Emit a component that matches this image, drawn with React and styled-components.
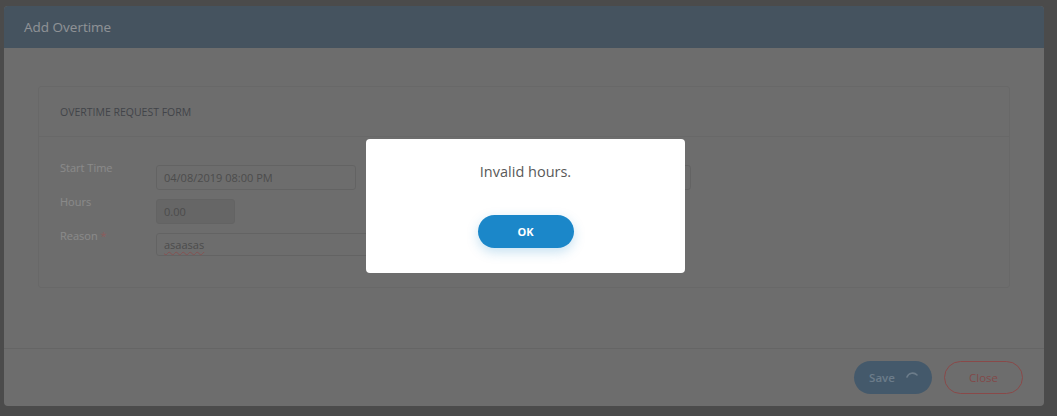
import React from "react";
import styled, { createGlobalStyle } from "styled-components";

const Global = createGlobalStyle`
  html, body { margin: 0; padding: 0; }
  body {
    background: #7d7d7d;
    font-family: "Open Sans", "Noto Sans", sans-serif;
    width: 1057px;
    height: 416px;
    overflow: hidden;
  }
`;

const Page = styled.div`
  position: relative;
  width: 1057px;
  height: 416px;
  padding: 6px 0 0 4px;
  box-sizing: border-box;
`;

const Modal = styled.div`
  width: 1040px;
  height: 400px;
  background: #b6b6b6;
  border-radius: 4px;
  display: flex;
  flex-direction: column;
  overflow: hidden;
`;

const Header = styled.div`
  height: 42px;
  background: #738a9e;
  display: flex;
  align-items: center;
  padding: 0 20px;
  color: #eef4fa;
  font-size: 13.5px;
  font-weight: 500;
`;

const Body = styled.div`
  flex: 1;
  padding: 38px 34px 0;
`;

const Card = styled.div`
  border: 1px solid #adadad;
  border-radius: 3px;
`;

const CardHead = styled.div`
  height: 49px;
  border-bottom: 1px solid #adadad;
  display: flex;
  align-items: center;
  padding: 0 21px;
  color: #6e727a;
  font-size: 10.5px;
  text-transform: uppercase;
`;

const CardBody = styled.div`
  padding: 28px 21px 31px;
  display: flex;
  flex-direction: column;
  gap: 9px;
`;

const Row = styled.div`
  display: flex;
  align-items: flex-start;
`;

const Label = styled.div`
  width: 96px;
  flex: none;
  color: #e6e6e6;
  font-size: 11px;
  line-height: 14px;
  margin-top: -4px;
`;

const Req = styled.span`
  color: #e89a9a;
`;

const Input = styled.div`
  box-sizing: border-box;
  width: ${(p) => p.$w}px;
  height: ${(p) => p.$h || 25}px;
  border: 1px solid #a6a6a6;
  border-radius: 3px;
  background: ${(p) => (p.$disabled ? "#aaaaaa" : "#b6b6b6")};
  color: #7f7f7f;
  font-size: 11px;
  display: flex;
  align-items: center;
  padding: 0 7px;
  margin-left: ${(p) => p.$ml || 0}px;
`;

const Spell = styled.span`
  text-decoration: underline wavy #d88;
  text-decoration-thickness: 1px;
  text-underline-offset: 2px;
`;

const Footer = styled.div`
  height: 57px;
  border-top: 1px solid #a8a8a8;
  display: flex;
  justify-content: flex-end;
  align-items: center;
  gap: 12px;
  padding: 0 21px 0 0;
`;

const SaveBtn = styled.div`
  box-sizing: border-box;
  width: 78px;
  height: 33px;
  border-radius: 17px;
  background: #7295b2;
  color: #b4cfe6;
  font-size: 11.5px;
  font-weight: 600;
  display: flex;
  align-items: center;
  justify-content: center;
  gap: 10px;
  padding-left: 2px;
`;

const CloseBtn = styled.div`
  box-sizing: border-box;
  width: 79px;
  height: 33px;
  border-radius: 17px;
  border: 1px solid #e57a7a;
  color: #d87a7a;
  font-size: 11.5px;
  font-weight: 500;
  display: flex;
  align-items: center;
  justify-content: center;
`;

const Overlay = styled.div`
  position: absolute;
  inset: 0;
  background: rgba(0, 0, 0, 0.4);
  display: flex;
  align-items: center;
  justify-content: center;
  padding: 0 6px 4px 0;
  box-sizing: border-box;
`;

const Alert = styled.div`
  width: 319px;
  height: 134px;
  background: #fff;
  border-radius: 4px;
  display: flex;
  flex-direction: column;
  align-items: center;
  box-sizing: border-box;
  padding-top: 23px;
`;

const AlertText = styled.div`
  color: #595959;
  font-size: 14.5px;
  line-height: 20px;
`;

const OkBtn = styled.div`
  margin-top: 33px;
  width: 96px;
  height: 33px;
  border-radius: 17px;
  background: #1b87c9;
  color: #fff;
  font-size: 11px;
  font-weight: 700;
  display: flex;
  align-items: center;
  justify-content: center;
  box-shadow: 0 4px 12px rgba(27, 135, 201, 0.25);
`;

const Spinner = () => (
  <svg width="14" height="14" viewBox="0 0 14 14">
    <path d="M2 6 A6 6 0 0 1 12 4" fill="none" stroke="#b4cfe6" strokeWidth="1.6" strokeLinecap="round" />
  </svg>
);

export default function App() {
  return (
    <>
      <Global />
      <Page>
        <Modal>
          <Header>Add Overtime</Header>
          <Body>
            <Card>
              <CardHead>Overtime Request Form</CardHead>
              <CardBody>
                <Row>
                  <Label>Start Time</Label>
                  <Input $w={200}>04/08/2019 08:00 PM</Input>
                  <Input $w={200} $ml={135} />
                </Row>
                <Row>
                  <Label>Hours</Label>
                  <Input $w={79} $disabled>0.00</Input>
                </Row>
                <Row>
                  <Label>
                    Reason <Req>*</Req>
                  </Label>
                  <Input $w={500} $h={23}>
                    <Spell>asaasas</Spell>
                  </Input>
                </Row>
              </CardBody>
            </Card>
          </Body>
          <Footer>
            <SaveBtn>
              Save <Spinner />
            </SaveBtn>
            <CloseBtn>Close</CloseBtn>
          </Footer>
        </Modal>
        <Overlay>
          <Alert>
            <AlertText>Invalid hours.</AlertText>
            <OkBtn>OK</OkBtn>
          </Alert>
        </Overlay>
      </Page>
    </>
  );
}
